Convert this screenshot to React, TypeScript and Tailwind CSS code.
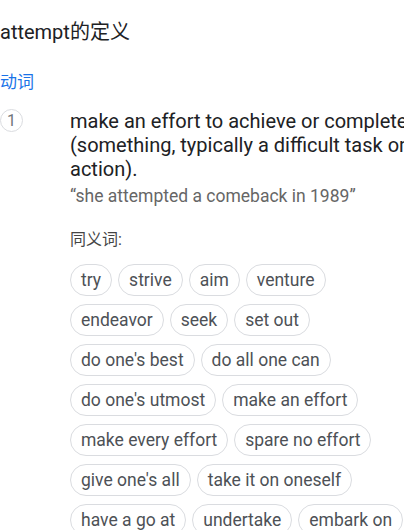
import React from 'react'

const synonyms = [
  'try',
  'strive',
  'aim',
  'venture',
  'endeavor',
  'seek',
  'set out',
  "do one's best",
  'do all one can',
  "do one's utmost",
  'make an effort',
  'make every effort',
  'spare no effort',
  "give one's all",
  'take it on oneself',
  'have a go at',
  'undertake',
  'embark on',
]

export default function App() {
  return (
    <div className="w-[404px] h-[530px] overflow-hidden bg-white font-['Roboto','Noto_Sans_CJK_SC',sans-serif] text-[#202124]">
      <div className="w-[430px]">
        {/* Title */}
        <div className="pt-[18px] text-[20px] leading-[28px]">attempt的定义</div>

        {/* Part of speech */}
        <div className="mt-[24px] text-[17px] leading-[24px] text-[#1a73e8]">动词</div>

        {/* Sense 1 */}
        <div className="mt-[15px] flex">
          <div className="w-[70px] shrink-0">
            <div className="flex h-[23px] w-[23px] items-center justify-center rounded-full border border-[#dadce0] text-[16px] text-[#70757a]">
              1
            </div>
          </div>
          <div className="w-[350px]">
            <div className="text-[20px] leading-[24px]">
              make an effort to achieve or complete (something, typically a difficult task or action).
            </div>
            <div className="mt-[3px] text-[17.5px] leading-[24px] text-[#666]">
              “she attempted a comeback in 1989”
            </div>

            <div className="mt-[20px] text-[16px] leading-[24px] text-[#444]">同义词:</div>

            <div className="mt-[12px] flex w-[345px] flex-wrap gap-x-[6px] gap-y-[8px]">
              {synonyms.map((s) => (
                <span
                  key={s}
                  className="flex h-[32px] items-center rounded-full border border-[#dadce0] px-[10px] text-[17.5px] text-[#4d5156]"
                >
                  {s}
                </span>
              ))}
            </div>
          </div>
        </div>
      </div>
    </div>
  )
}
